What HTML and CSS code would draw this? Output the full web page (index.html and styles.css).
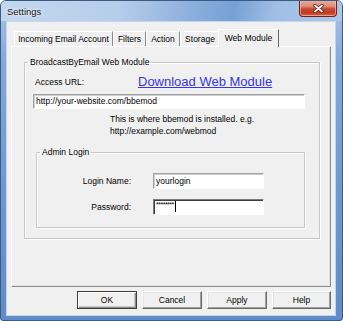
FILE: index.html
```html
<!DOCTYPE html>
<html lang="en">
<head>
    <meta charset="UTF-8">
    <title>Settings</title>
    <link rel="stylesheet" href="styles.css">
</head>
<body>
    <div class="window">
        <div class="titlebar">
            <span class="title">Settings</span>
            <button class="close-btn" aria-label="Close">
                <svg width="11" height="9" viewBox="0 0 11 9">
                    <path d="M2 1.5 L9 7.5 M9 1.5 L2 7.5" stroke="#5a1a12" stroke-width="3.4" stroke-linecap="round"/>
                    <path d="M2 1.5 L9 7.5 M9 1.5 L2 7.5" stroke="#ffffff" stroke-width="1.8" stroke-linecap="round"/>
                </svg>
            </button>
        </div>
        <div class="client">
            <div class="tabs">
                <div class="tab tab-incoming">Incoming Email Account</div>
                <div class="tab tab-filters">Filters</div>
                <div class="tab tab-action">Action</div>
                <div class="tab tab-storage">Storage</div>
                <div class="tab tab-active">Web Module</div>
            </div>
            <div class="panel">
                <fieldset class="group group-main">
                    <legend>BroadcastByEmail Web Module</legend>
                    <div class="url-row">
                        <span class="url-label">Access URL:</span>
                        <a class="download-link" href="#">Download Web Module</a>
                    </div>
                    <div class="field url-field">http://your-website.com/bbemod</div>
                    <p class="hint">This is where bbemod is installed. e.g.<br>http://example.com/webmod</p>
                    <fieldset class="group group-login">
                        <legend>Admin Login</legend>
                        <div class="login-grid">
                            <label class="login-label">Login Name:</label>
                            <div class="field">yourlogin</div>
                            <label class="login-label">Password:</label>
                            <div class="field field-focus"><span class="stars">********</span><span class="caret"></span></div>
                        </div>
                    </fieldset>
                </fieldset>
            </div>
            <div class="buttons">
                <button class="btn btn-default">OK</button>
                <button class="btn">Cancel</button>
                <button class="btn">Apply</button>
                <button class="btn btn-narrow">Help</button>
            </div>
        </div>
    </div>
</body>
</html>
```

FILE: styles.css
```css
body {
    margin: 0;
    padding: 0;
    background: #ffffff;
    font-family: "Liberation Sans", Arial, sans-serif;
    font-size: 8.5px;
    color: #000000;
}
.window {
    width: 343px;
    height: 321px;
    box-sizing: border-box;
    border: 1px solid #3d5a80;
    border-radius: 6px 6px 3px 3px;
    background: linear-gradient(180deg, #a9c4e7 0px, #84a9da 60px, #6d97cf 200px, #5f8bc8 100%);
    display: flex;
    flex-direction: column;
    overflow: hidden;
}
.titlebar {
    height: 20px;
    flex: none;
    display: flex;
    justify-content: space-between;
    align-items: flex-start;
    background: linear-gradient(100deg, #c3d7ef 0%, #b6cdea 35%, #8eb0dd 55%, #76a0d5 68%, #a0bee5 80%, #adc7e8 100%);
}
.title {
    font-size: 9.5px;
    line-height: 22px;
    padding-left: 6px;
    color: #101010;
    text-shadow: 0 0 4px #ffffff, 0 0 2px #ffffff;
}
.close-btn {
    width: 38px;
    height: 17px;
    margin: -1px 5px 0 0;
    padding: 0;
    border: 1px solid #6e2219;
    border-top: none;
    border-radius: 0 0 4px 4px;
    background: linear-gradient(180deg, #eab2a4 0%, #dc8a75 40%, #c9482f 55%, #c03a22 80%, #d8674e 100%);
    box-shadow: inset 0 0 0 1px rgba(255, 210, 200, 0.55);
    display: flex;
    align-items: center;
    justify-content: center;
}
.client {
    flex: 1;
    margin: 0 6px 4px 5px;
    border: 1px solid #c6d6ea;
    background: #f0f0f0;
    padding: 7px 4px 6px 4px;
    display: flex;
    flex-direction: column;
}
.tabs {
    height: 17px;
    display: flex;
    align-items: flex-end;
    padding-left: 3px;
}
.tab {
    height: 15px;
    box-sizing: border-box;
    line-height: 14px;
    text-align: center;
    border-top: 1px solid #ffffff;
    border-left: 1px solid #ffffff;
    border-right: 1px solid #8c8c8c;
    background: #f0f0f0;
    white-space: nowrap;
}
.tab-incoming { width: 99px; }
.tab-filters { width: 33px; }
.tab-action { width: 34px; }
.tab-storage { width: 40px; }
.tab-active {
    width: 61px;
    height: 18px;
    margin: 0 0 -1px -2px;
    line-height: 17px;
    border-right-color: #696969;
    position: relative;
    z-index: 1;
}
.panel {
    flex: 1;
    border-top: 1px solid #ffffff;
    border-left: 1px solid #ffffff;
    border-right: 1px solid #8c8c8c;
    border-bottom: 1px solid #8c8c8c;
    box-shadow: inset -1px -1px 0 #e3e3e3;
    padding: 10px 10px 0 12px;
}
.group {
    margin: 0;
    padding: 0;
    border: 1px solid #c8c8c8;
    box-shadow: 1px 1px 0 #ffffff, inset 1px 1px 0 #ffffff;
}
.group legend {
    margin-left: 3px;
    padding: 0 2px;
    line-height: 10px;
}
.group-main {
    padding-bottom: 10px;
}
.url-row {
    height: 15px;
    margin-top: 7px;
    padding-left: 10px;
    display: flex;
    align-items: center;
}
.url-label {
    width: 103px;
}
.download-link {
    font-size: 13px;
    color: #3434ef;
    text-decoration: underline;
}
.field {
    height: 16px;
    box-sizing: border-box;
    background: #ffffff;
    border-top: 1px solid #a0a0a0;
    border-left: 1px solid #a0a0a0;
    border-right: 1px solid #ffffff;
    border-bottom: 1px solid #ffffff;
    box-shadow: inset 1px 1px 0 #d0d0d0;
    padding-left: 2px;
    line-height: 14px;
    white-space: nowrap;
    overflow: hidden;
}
.url-field {
    height: 15px;
    line-height: 13px;
    margin: 5px 14px 0 8px;
}
.hint {
    margin: 4px 0 0 85px;
    line-height: 12px;
}
.group-login {
    margin: 10px 14px 0 11px;
    padding-bottom: 12px;
}
.login-grid {
    margin-top: 16px;
    display: grid;
    grid-template-columns: 94px 111px;
    column-gap: 22px;
    row-gap: 10px;
    align-items: center;
}
.login-label {
    text-align: right;
}
.field-focus {
    border-top-color: #7a7a7a;
    border-left-color: #7a7a7a;
    box-shadow: inset 1px 1px 0 #3c3c3c;
    display: flex;
    align-items: flex-start;
}
.stars {
    font-size: 7px;
    line-height: 10px;
    letter-spacing: -0.5px;
}
.caret {
    width: 1px;
    height: 11px;
    margin: 1px 0 0 1px;
    background: #000000;
}
.buttons {
    margin-top: 4px;
    display: flex;
    justify-content: flex-end;
    gap: 5px;
}
.btn {
    width: 60px;
    height: 18px;
    padding: 0;
    font-family: "Liberation Sans", Arial, sans-serif;
    font-size: 8.5px;
    color: #000000;
    background: #f0f0f0;
    border-top: 1px solid #ffffff;
    border-left: 1px solid #ffffff;
    border-right: 1px solid #696969;
    border-bottom: 1px solid #696969;
    box-shadow: inset -1px -1px 0 #a0a0a0, inset 1px 1px 0 #e3e3e3;
}
.btn-default {
    border: 1px solid #3c3c3c;
    box-shadow: inset 1px 1px 0 #ffffff, inset -1px -1px 0 #8c8c8c, inset -2px -2px 0 #c8c8c8;
}
.btn-narrow {
    width: 59px;
}
```
